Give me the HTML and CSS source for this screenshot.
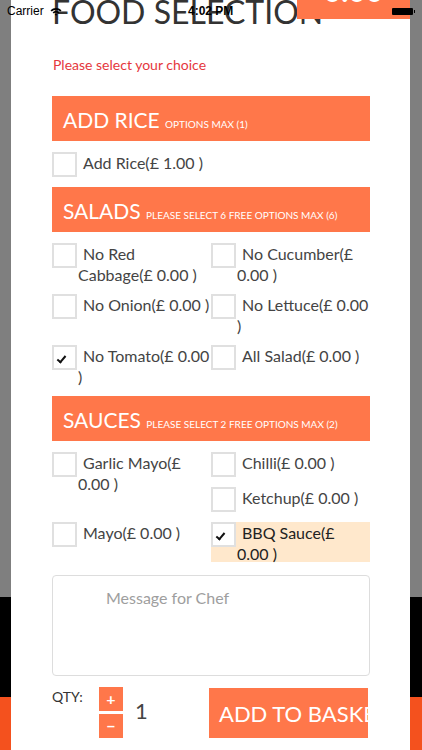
FILE: index.html
```html
<!DOCTYPE html>
<html lang="en">
<head>
    <meta charset="UTF-8">
    <meta name="viewport" content="width=device-width, initial-scale=1.0">
    <title>Food Selection</title>
    <link rel="stylesheet" href="styles.css">
</head>
<body>

    <!-- page behind the popup -->
    <div class="backdrop">
        <div class="backdrop-top"></div>
        <div class="backdrop-dark"></div>
        <div class="backdrop-footer"></div>
    </div>

    <div class="modal">
        <h1 class="title">FOOD SELECTION</h1>
        <p class="hint">Please select your choice</p>

        <div class="group-header">ADD RICE <small>OPTIONS MAX (1)</small></div>
        <div class="options">
            <label class="option"><span class="box"></span><span class="text">Add Rice(£ 1.00 )</span></label>
        </div>

        <div class="group-header">SALADS <small>PLEASE SELECT 6 FREE OPTIONS MAX (6)</small></div>
        <div class="options">
            <label class="option"><span class="box"></span><span class="text">No Red Cabbage(£ 0.00 )</span></label>
            <label class="option"><span class="box"></span><span class="text">No Cucumber(£ 0.00 )</span></label>
            <label class="option"><span class="box"></span><span class="text">No Onion(£ 0.00 )</span></label>
            <label class="option"><span class="box"></span><span class="text">No Lettuce(£ 0.00 )</span></label>
            <label class="option"><span class="box checked"></span><span class="text">No Tomato(£ 0.00 )</span></label>
            <label class="option"><span class="box"></span><span class="text">All Salad(£ 0.00 )</span></label>
        </div>

        <div class="group-header">SAUCES <small>PLEASE SELECT 2 FREE OPTIONS MAX (2)</small></div>
        <div class="options">
            <label class="option tall"><span class="box"></span><span class="text">Garlic Mayo(£ 0.00 )</span></label>
            <label class="option"><span class="box"></span><span class="text">Chilli(£ 0.00 )</span></label>
            <label class="option"><span class="box"></span><span class="text">Ketchup(£ 0.00 )</span></label>
            <label class="option"><span class="box"></span><span class="text">Mayo(£ 0.00 )</span></label>
            <label class="option selected"><span class="box checked"></span><span class="text">BBQ Sauce(£ 0.00 )</span></label>
        </div>

        <textarea class="chef-note" placeholder="Message for Chef"></textarea>

        <div class="order-row">
            <span class="qty-label">QTY:</span>
            <div class="stepper">
                <button type="button" class="step">+</button>
                <button type="button" class="step">&minus;</button>
            </div>
            <span class="qty-value">1</span>
            <button type="button" class="add-btn">ADD TO BASKET</button>
        </div>
    </div>

    <!-- price tag of the page behind, peeking over the popup -->
    <div class="price-tag"><span>0.00</span></div>

    <div class="status-bar">
        <span class="carrier">Carrier
            <svg class="wifi" width="12" height="9" viewBox="0 0 12 9">
                <path d="M0.5 3.2 A8 8 0 0 1 11.5 3.2 L10.3 4.4 A6.3 6.3 0 0 0 1.7 4.4 Z" fill="#000"/>
                <path d="M2.6 5.3 A5 5 0 0 1 9.4 5.3 L8.2 6.5 A3.3 3.3 0 0 0 3.8 6.5 Z" fill="#000"/>
                <path d="M4.7 7.4 A2 2 0 0 1 7.3 7.4 L6 8.8 Z" fill="#000"/>
            </svg>
        </span>
        <span class="clock">4:02 PM</span>
        <span class="battery"></span>
    </div>

</body>
</html>
```

FILE: styles.css
```css
body {
    margin: 0;
    width: 422px;
    height: 750px;
    overflow: hidden;
    position: relative;
    font-family: Lato, "Open Sans", sans-serif;
    background-color: #7f7f7f;
}

.backdrop {
    display: flex;
    flex-direction: column;
    height: 100%;
}

.backdrop-top {
    height: 597px;
    background-color: #7f7f7f;
}

.backdrop-dark {
    height: 100px;
    background-color: #000000;
}

.backdrop-footer {
    flex: 1;
    background-color: #f4511e;
}

.modal {
    position: absolute;
    top: 0;
    bottom: 0;
    left: 11px;
    width: 318px;
    padding: 0 40px 0 41px;
    background-color: #ffffff;
    overflow: hidden;
}

.title {
    margin: -8px 0 0 0;
    font-size: 32px;
    font-weight: 400;
    line-height: 40px;
    color: #333333;
    white-space: nowrap;
}

.hint {
    margin: 24px 0 22px 1px;
    font-size: 14px;
    line-height: 18px;
    color: #e5373d;
}

.group-header {
    height: 45px;
    padding-left: 11px;
    background-color: #ff774a;
    color: #ffffff;
    font-size: 21px;
    line-height: 47px;
    white-space: nowrap;
    margin-bottom: 11px;
}

.group-header small {
    font-size: 10px;
}

/* two columns of check options */
.options {
    display: grid;
    grid-template-columns: 159px 159px;
}

.option {
    display: block;
    margin-bottom: 10px;
    font-size: 16px;
    line-height: 20.5px;
    color: #444444;
}

.option::after {
    content: "";
    display: block;
    clear: both;
}

.option.tall {
    grid-row: span 2;
}

.option.selected {
    background-color: #ffe8cc;
    color: #222222;
    margin-bottom: 0;
    height: 40px;
}

.box {
    float: left;
    width: 21px;
    height: 21px;
    border: 2px solid #e0e0e0;
    margin-right: 1px;
    background-color: #ffffff;
    position: relative;
}

.box.checked::after {
    content: "";
    position: absolute;
    left: 5px;
    top: 7px;
    width: 3px;
    height: 7px;
    border-right: 2px solid #111111;
    border-bottom: 2px solid #111111;
    transform: rotate(40deg);
}

.text {
    display: block;
    position: relative;
    top: 1px;
    text-indent: 5px;
}

.chef-note {
    display: block;
    width: 318px;
    height: 101px;
    margin-top: 13px;
    box-sizing: border-box;
    padding: 11px 10px 10px 53px;
    border: 1px solid #dddddd;
    border-radius: 4px;
    font-family: Lato, sans-serif;
    font-size: 16px;
    line-height: 22px;
    resize: none;
}

.chef-note::placeholder {
    color: #9e9e9e;
}

.order-row {
    display: flex;
    align-items: flex-start;
    margin-top: 11px;
}

.qty-label {
    font-size: 14px;
    line-height: 18px;
    margin-top: 1px;
    color: #333333;
    width: 47px;
}

.stepper {
    display: flex;
    flex-direction: column;
    gap: 3px;
}

.step {
    width: 24px;
    height: 24px;
    padding: 0;
    border: none;
    background-color: #ff774a;
    color: #ffffff;
    font-family: Lato, sans-serif;
    font-size: 16px;
    font-weight: 700;
    line-height: 24px;
}

.qty-value {
    margin: 11px 0 0 12px;
    font-size: 22px;
    line-height: 26px;
    color: #444444;
    width: 74px;
}

.add-btn {
    width: 159px;
    height: 50px;
    margin-top: 1px;
    padding: 0 0 0 10px;
    border: none;
    background-color: #ff774a;
    color: #ffffff;
    font-family: Lato, sans-serif;
    font-size: 22px;
    text-align: left;
    white-space: nowrap;
    overflow: hidden;
}

.price-tag {
    position: absolute;
    top: 0;
    left: 297px;
    width: 113px;
    height: 19px;
    background-color: #ff774a;
    color: #ffffff;
    font-size: 30px;
    font-weight: 700;
    text-align: center;
    overflow: hidden;
}

/* only the bottom of the figures shows under the top edge */
.price-tag span {
    display: block;
    margin-top: -25px;
    line-height: 30px;
}

.status-bar {
    position: absolute;
    top: 0;
    left: 0;
    right: 0;
    height: 20px;
    font-family: "Liberation Sans", Arial, sans-serif;
    font-size: 12px;
    color: #000000;
}

.carrier {
    position: absolute;
    left: 7px;
    top: 4px;
}

.wifi {
    margin-left: 3px;
    vertical-align: -1px;
}

.clock {
    position: absolute;
    left: 188px;
    top: 4px;
    font-weight: 700;
}

.battery {
    position: absolute;
    left: 392px;
    top: 8px;
    width: 21px;
    height: 7px;
    border-radius: 1px;
    background-color: #000000;
}

.battery::after {
    content: "";
    position: absolute;
    right: -2px;
    top: 2px;
    width: 1px;
    height: 3px;
    background-color: #000000;
}
```
